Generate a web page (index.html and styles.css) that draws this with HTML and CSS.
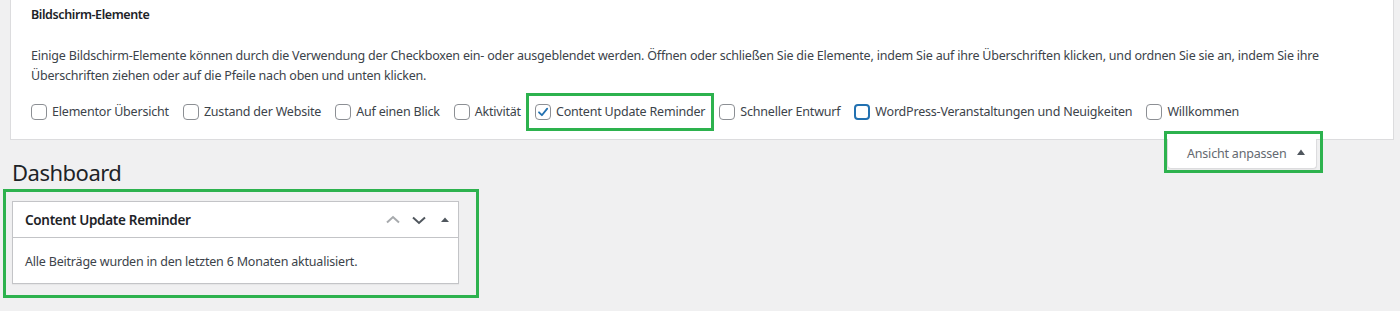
FILE: index.html
```html
<!DOCTYPE html>
<html lang="de">
<head>
<meta charset="utf-8">
<title>Dashboard</title>
<link rel="stylesheet" href="styles.css">
</head>
<body>
<div class="screen-meta">
  <h5 class="meta-title">Bildschirm-Elemente</h5>
  <p class="meta-desc">Einige Bildschirm-Elemente können durch die Verwendung der Checkboxen ein- oder ausgeblendet werden. Öffnen oder schließen Sie die Elemente, indem Sie auf ihre Überschriften klicken, und ordnen Sie sie an, indem Sie ihre Überschriften ziehen oder auf die Pfeile nach oben und unten klicken.</p>
  <div class="prefs">
    <label class="pref"><span class="cb"></span>Elementor Übersicht</label>
    <label class="pref"><span class="cb"></span>Zustand der Website</label>
    <label class="pref"><span class="cb"></span>Auf einen Blick</label>
    <label class="pref"><span class="cb"></span>Aktivität</label>
    <label class="pref hl-pref"><span class="cb checked"><svg viewBox="0 0 16 16" width="16" height="16"><path d="M4 8.3 L6.9 11.2 L12.2 4.6" fill="none" stroke="#2271b1" stroke-width="1.8" stroke-linecap="round" stroke-linejoin="round"/></svg></span>Content Update Reminder</label>
    <label class="pref"><span class="cb"></span>Schneller Entwurf</label>
    <label class="pref"><span class="cb focus"></span>WordPress-Veranstaltungen und Neuigkeiten</label>
    <label class="pref"><span class="cb"></span>Willkommen</label>
  </div>
</div>
<div class="meta-links">
  <div class="hl hl-tab">
    <button class="tab">Ansicht anpassen<svg class="tri" viewBox="0 0 8 6" width="8" height="6"><path d="M0 6 L4 0.5 L8 6 Z" fill="currentColor"/></svg></button>
  </div>
</div>
<h1 class="page-title">Dashboard</h1>
<div class="widgets">
  <div class="hl hl-box">
    <div class="postbox">
      <div class="pb-head">
        <h2 class="pb-title">Content Update Reminder</h2>
        <div class="pb-actions">
          <svg class="chev up" viewBox="0 0 20 20" width="20" height="20"><path d="M4 12.5 L10 7 L16 12.5" fill="none" stroke="currentColor" stroke-width="2"/></svg>
          <svg class="chev down" viewBox="0 0 20 20" width="20" height="20"><path d="M4 7.5 L10 13 L16 7.5" fill="none" stroke="currentColor" stroke-width="2"/></svg>
          <svg class="chev toggle" viewBox="0 0 20 20" width="20" height="20"><path d="M6 12 L10 7.5 L14 12 Z" fill="currentColor"/></svg>
        </div>
      </div>
      <div class="pb-body">Alle Beiträge wurden in den letzten 6 Monaten aktualisiert.</div>
    </div>
  </div>
</div>
</body>
</html>
```

FILE: styles.css
```css
* { box-sizing: border-box; }
html, body { margin: 0; padding: 0; }
body {
  background: #f0f0f1;
  font-family: "Noto Sans", "Open Sans", sans-serif;
  font-size: 12.5px;
  letter-spacing: -0.2px;
  color: #3c434a;
  width: 1400px;
  height: 311px;
  overflow: hidden;
}
.screen-meta {
  margin: -12px 6px 0 10px;
  background: #fff;
  border: 1px solid #dcdcde;
  padding: 16px 20px 17px 20px;
}
.meta-title {
  margin: 0;
  font-size: 12.5px;
  font-weight: 600;
  letter-spacing: -0.4px;
  line-height: 20px;
  color: #1d2327;
}
.meta-desc {
  margin: 21px 0 0 0;
  line-height: 20px;
}
.prefs {
  margin-top: 16px;
  display: flex;
  align-items: center;
  height: 20px;
}
.pref {
  display: inline-flex;
  align-items: center;
  margin-right: 14px;
  line-height: 20px;
  white-space: nowrap;
}
.cb {
  width: 16px;
  height: 16px;
  border: 1px solid #8c8f94;
  border-radius: 4px;
  margin-right: 5px;
  background: #fff;
  display: inline-block;
  flex: none;
}
.cb svg { display: block; margin: -1px; }
.cb.focus {
  border: 2px solid #2271b1;
}
.hl-pref {
  outline: 3px solid #2db24e;
  outline-offset: 6px;
}
.meta-links {
  display: flex;
  justify-content: flex-end;
  padding-right: 83px;
}
.hl { position: relative; }
.hl::after {
  content: "";
  position: absolute;
  border: 3px solid #2db24e;
  pointer-events: none;
}
.hl-tab::after { left: -3px; right: -6px; top: -9px; bottom: -4px; }
.tab {
  display: flex;
  align-items: center;
  height: 30px;
  width: 150px;
  margin: -1px 0 0 0;
  padding: 0 0 1px 19px;
  background: #fff;
  border: 1px solid #dcdcde;
  border-top: none;
  border-radius: 0 0 4px 4px;
  box-shadow: 0 1px 1px rgba(0,0,0,.04);
  font-family: inherit;
  font-size: 12.5px;
  letter-spacing: -0.2px;
  white-space: nowrap;
  color: #646970;
  justify-content: flex-start;
}
.tri { display: block; margin-left: 11px; margin-top: -2px; color: #50575e; }
.page-title {
  margin: -11px 0 0 12px;
  font-size: 22px;
  letter-spacing: -0.5px;
  font-weight: 400;
  line-height: 29px;
  color: #1d2327;
}
.widgets {
  padding: 14px 0 0 12px;
  width: 459px;
}
.hl-box::after { left: -9px; right: -20px; top: -12px; bottom: -14px; }
.postbox {
  background: #fff;
  border: 1px solid #c3c4c7;
  box-shadow: 0 1px 1px rgba(0,0,0,.04);
}
.pb-head {
  display: flex;
  align-items: center;
  justify-content: space-between;
  height: 36px;
  border-bottom: 1px solid #c3c4c7;
  padding-left: 12px;
}
.pb-title {
  margin: 0;
  font-size: 13.5px;
  letter-spacing: -0.3px;
  font-weight: 600;
  color: #1d2327;
}
.pb-actions { display: flex; align-items: center; padding-right: 3px; }
.chev { display: block; margin-left: 6px; }
.up { color: #a7aaad; }
.down { color: #50575e; }
.toggle { color: #50575e; }
.pb-body {
  padding: 14px 12px 11px 12px;
  line-height: 20px;
}
```
